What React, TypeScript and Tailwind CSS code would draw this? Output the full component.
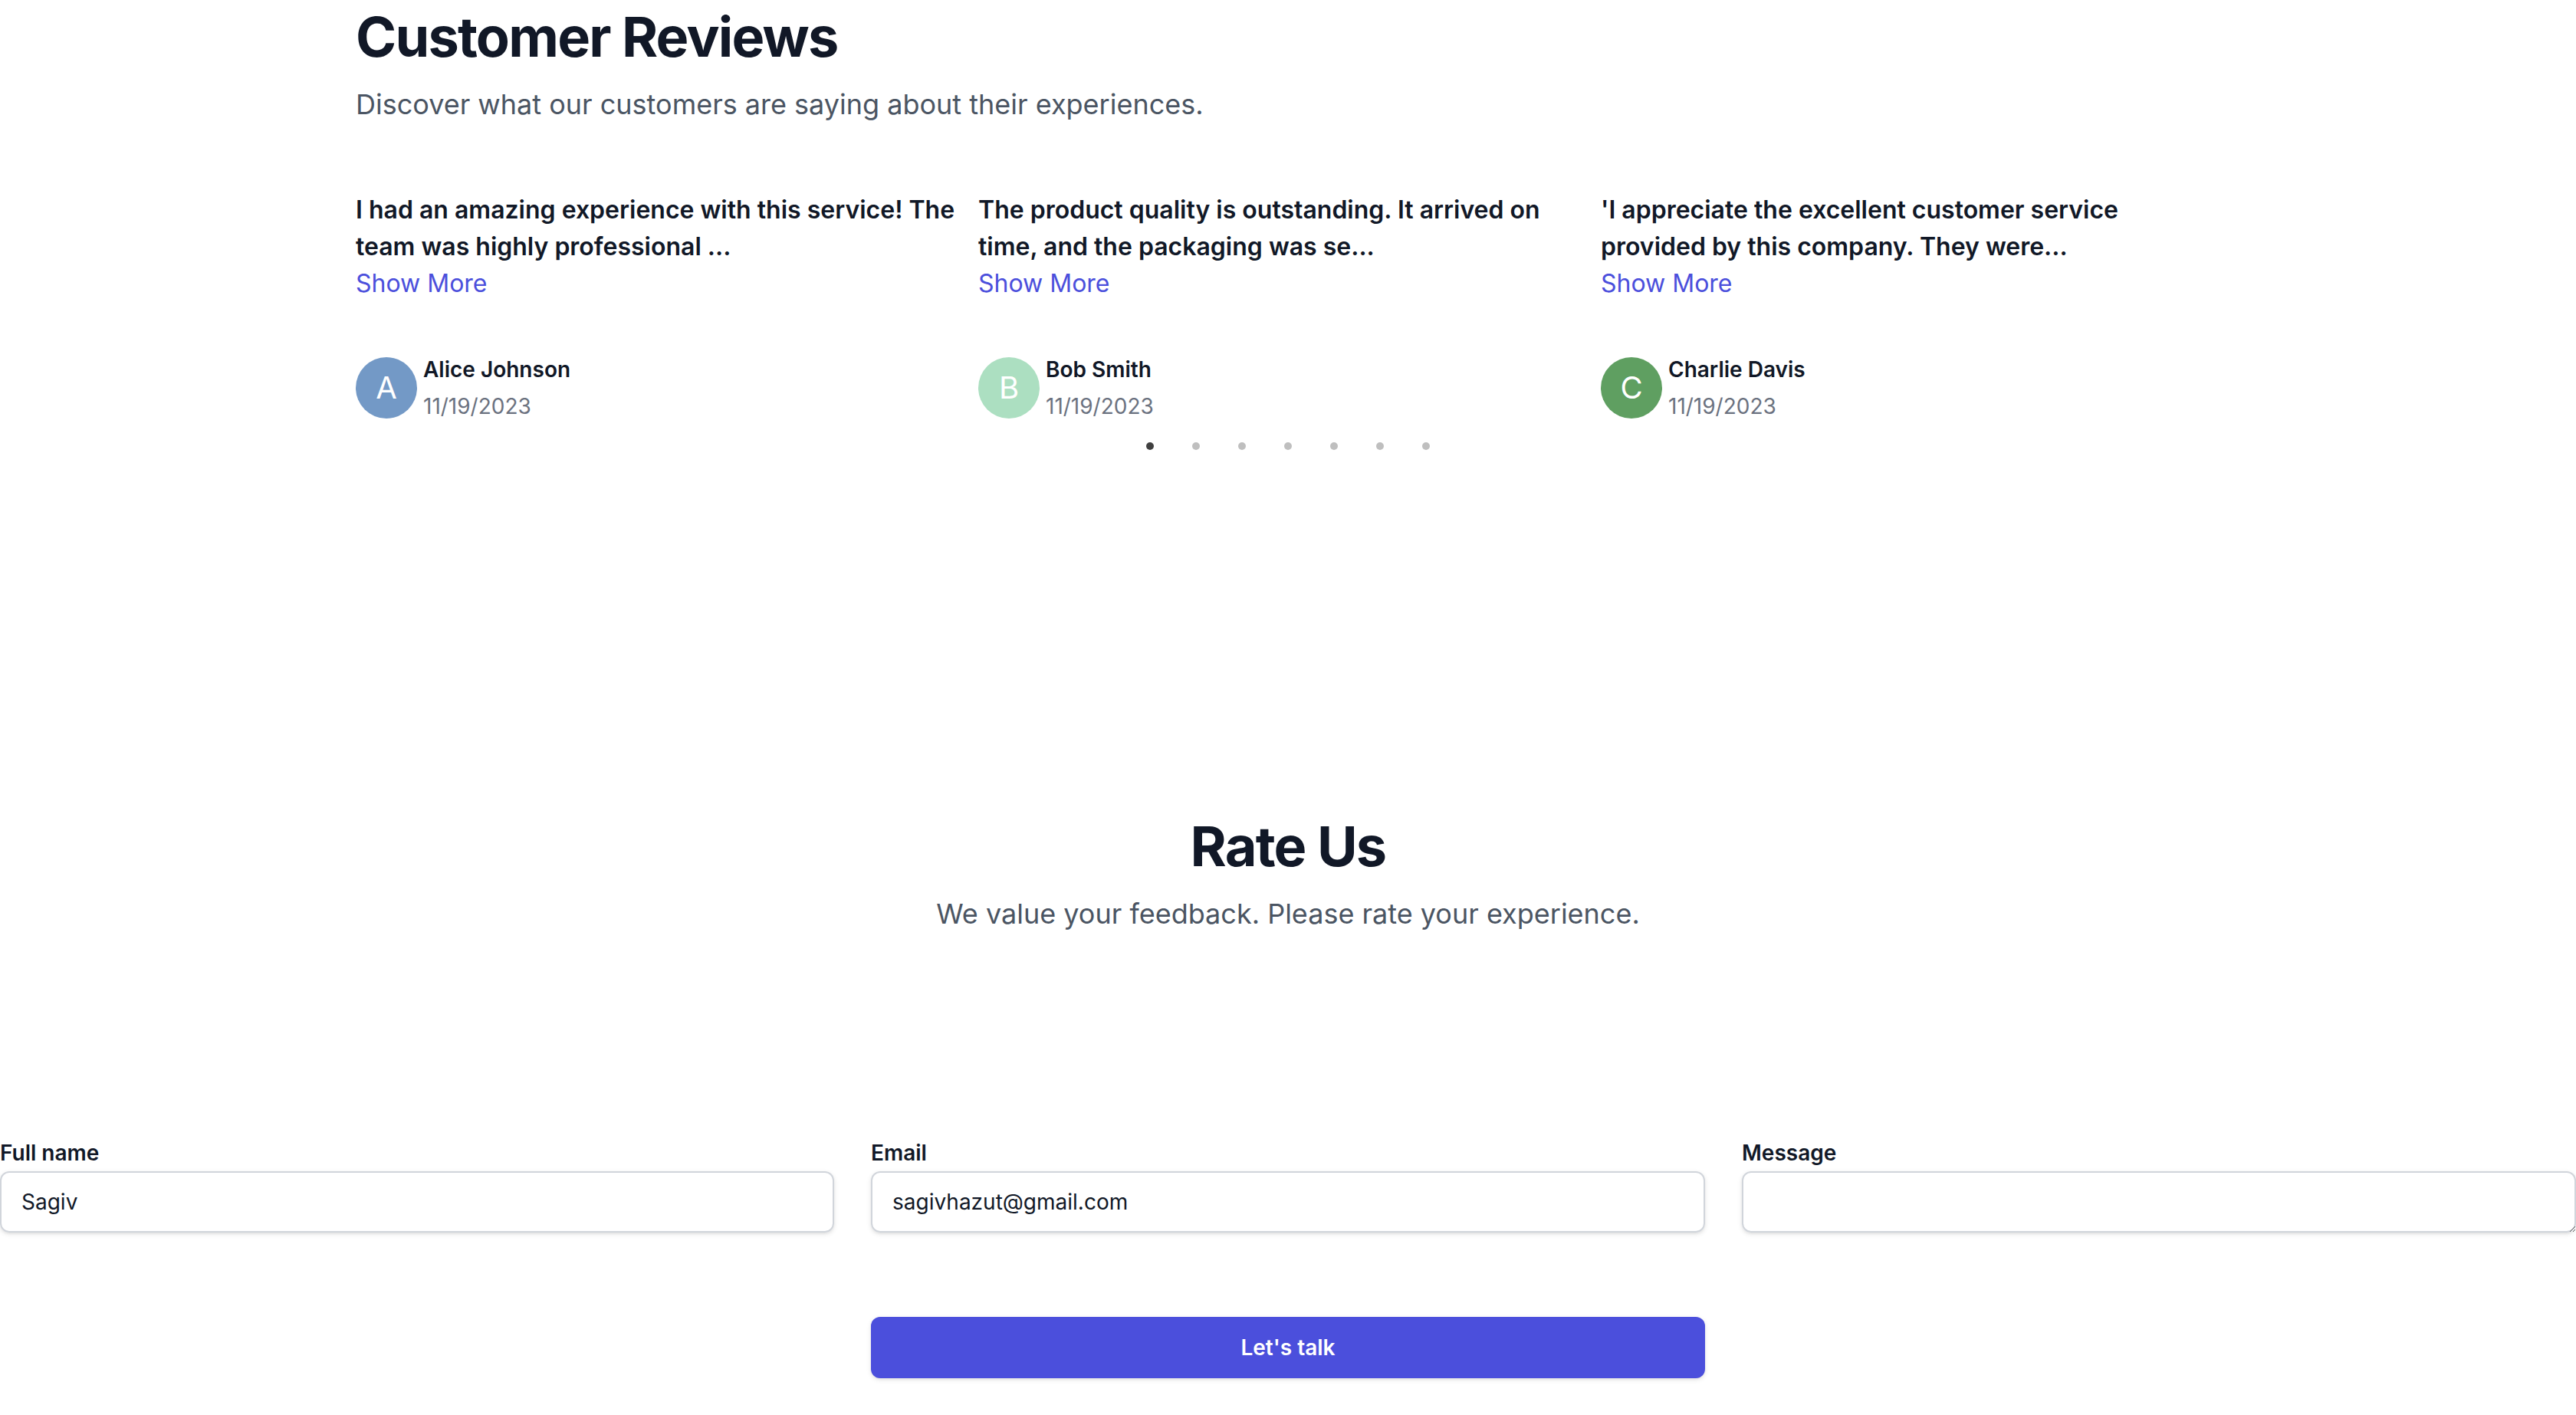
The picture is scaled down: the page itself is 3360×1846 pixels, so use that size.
import { useState } from "react";

type Review = {
  text: string;
  name: string;
  date: string;
  initial: string;
  color: string;
};

const reviews: Review[] = [
  {
    text: "I had an amazing experience with this service! The team was highly professional ...",
    name: "Alice Johnson",
    date: "11/19/2023",
    initial: "A",
    color: "bg-[#7399c6]",
  },
  {
    text: "The product quality is outstanding. It arrived on time, and the packaging was se...",
    name: "Bob Smith",
    date: "11/19/2023",
    initial: "B",
    color: "bg-[#acdfc1]",
  },
  {
    text: "'I appreciate the excellent customer service provided by this company. They were...",
    name: "Charlie Davis",
    date: "11/19/2023",
    initial: "C",
    color: "bg-[#5f9f61]",
  },
];

function ReviewCard({ review }: { review: Review }) {
  return (
    <div className="pr-2">
      <p className="text-base font-semibold leading-6 text-[#111827]">{review.text}</p>
      <button type="button" className="block text-base leading-6 text-[#4b4fdc]">
        Show More
      </button>
      <div className="mt-8 flex items-center gap-1">
        <div
          className={`flex h-10 w-10 shrink-0 items-center justify-center rounded-full text-xl text-white ${review.color}`}
        >
          {review.initial}
        </div>
        <div>
          <div className="text-sm font-semibold leading-6 text-[#111827]">{review.name}</div>
          <div className="text-sm leading-6 text-[#6b7280]">{review.date}</div>
        </div>
      </div>
    </div>
  );
}

export default function App() {
  const [active, setActive] = useState(0);
  const [name, setName] = useState("Sagiv");
  const [email, setEmail] = useState("sagivhazut@gmail.com");
  const [message, setMessage] = useState("");

  return (
    <div className="min-h-screen bg-white font-[Inter,sans-serif]">
      {/* screenshot was taken at 2x, so the page is laid out at half size and zoomed */}
      <div className="[zoom:2]">
        <section className="mx-auto max-w-7xl px-8 pt-1">
          <h2 className="text-4xl font-bold leading-10 tracking-tight text-[#111827]">Customer Reviews</h2>
          <p className="mt-2 text-lg leading-8 text-[#4b5563]">
            Discover what our customers are saying about their experiences.
          </p>

          <div className="mt-[41px] grid grid-cols-[repeat(3,406px)]">
            {reviews.map((review) => (
              <ReviewCard key={review.name} review={review} />
            ))}
          </div>
        </section>

        <ul className="mt-[4px] flex justify-center">
          {Array.from({ length: 7 }).map((_, i) => (
            <li key={i} className="mx-[5px]">
              <button
                type="button"
                onClick={() => setActive(i)}
                aria-label={`Go to slide ${i + 1}`}
                className="flex h-5 w-5 items-center justify-center"
              >
                <span
                  className={`h-[5px] w-[5px] rounded-full ${i === active ? "bg-[#404040]" : "bg-[#bfbfbf]"}`}
                />
              </button>
            </li>
          ))}
        </ul>

        <section className="mt-[231px] text-center">
          <h2 className="text-4xl font-bold leading-10 tracking-tight text-[#111827]">Rate Us</h2>
          <p className="mt-2 text-lg leading-8 text-[#4b5563]">
            We value your feedback. Please rate your experience.
          </p>
        </section>

        <form className="mt-[128px]" onSubmit={(e) => e.preventDefault()}>
          <div className="grid grid-cols-3 gap-x-6">
            <div>
              <label htmlFor="full-name" className="block text-sm font-semibold leading-6 text-[#111827]">
                Full name
              </label>
              <input
                id="full-name"
                type="text"
                value={name}
                onChange={(e) => setName(e.target.value)}
                className="block w-full rounded-md border-0 px-3.5 py-2 text-sm leading-6 text-[#111827] shadow-sm outline-none ring-1 ring-inset ring-[#d1d5db]"
              />
            </div>
            <div>
              <label htmlFor="email" className="block text-sm font-semibold leading-6 text-[#111827]">
                Email
              </label>
              <input
                id="email"
                type="email"
                value={email}
                onChange={(e) => setEmail(e.target.value)}
                className="block w-full rounded-md border-0 px-3.5 py-2 text-sm leading-6 text-[#111827] shadow-sm outline-none ring-1 ring-inset ring-[#d1d5db]"
              />
            </div>
            <div>
              <label htmlFor="message" className="block text-sm font-semibold leading-6 text-[#111827]">
                Message
              </label>
              <textarea
                id="message"
                rows={1}
                value={message}
                onChange={(e) => setMessage(e.target.value)}
                className="block w-full rounded-md border-0 px-3.5 py-2 text-sm leading-6 text-[#111827] shadow-sm outline-none ring-1 ring-inset ring-[#d1d5db]"
              />
            </div>
          </div>

          <div className="mt-[55px] grid grid-cols-3 gap-x-6">
            <button
              type="submit"
              className="col-start-2 block w-full rounded-md bg-[#4b4fdc] px-3.5 py-2.5 text-center text-sm font-semibold text-white shadow-sm"
            >
              Let&apos;s talk
            </button>
          </div>
        </form>
      </div>
    </div>
  );
}
